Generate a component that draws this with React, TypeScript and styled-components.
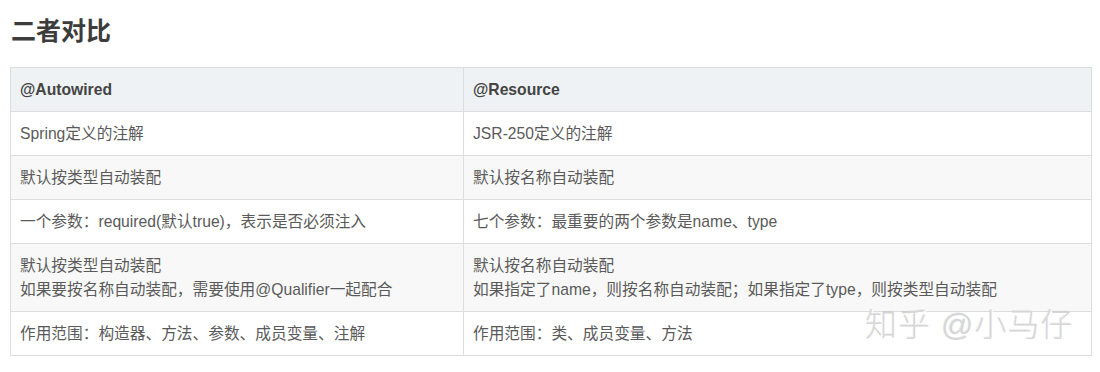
import styled, { createGlobalStyle } from 'styled-components';

const GlobalStyle = createGlobalStyle`
  html, body {
    margin: 0;
    padding: 0;
    background: #fff;
  }
  body {
    font-family: 'Liberation Sans', Arial, 'Noto Sans CJK SC', sans-serif;
    color: #555;
  }
`;

const Page = styled.div`
  position: relative;
  padding: 14px 9px 0 10px;
`;

const Title = styled.h2`
  margin: 0 0 19px 1px;
  font-size: 25px;
  line-height: 34px;
  font-weight: 700;
  color: #3c3c3c;
`;

const Table = styled.table`
  width: 1082px;
  border-collapse: collapse;
  table-layout: fixed;
  font-size: 15.7px;
  line-height: 24px;
`;

const Row = styled.tr<{ $striped?: boolean }>`
  background: ${(p) => (p.$striped ? '#f8f8f8' : '#fff')};
`;

const HeadCell = styled.th`
  text-align: left;
  font-weight: 700;
  color: #444;
  background: #eff2f5;
  border: 1px solid #dddddd;
  padding: 10px 9px 9px;
`;

const Cell = styled.td`
  border: 1px solid #dddddd;
  padding: 10px 9px 9px;
  color: #5a5a5a;
  vertical-align: top;
`;

const Watermark = styled.div`
  position: absolute;
  left: 865px;
  top: 305px;
  font-size: 32px;
  line-height: 40px;
  font-weight: 300;
  color: #d6d6d6;
  letter-spacing: 1px;
  text-shadow: 1px 1px 0 #fff, -1px -1px 0 rgba(0, 0, 0, 0.06);
  pointer-events: none;
  white-space: pre;
`;

const rows: [string[], string[]][] = [
  [['Spring定义的注解'], ['JSR-250定义的注解']],
  [['默认按类型自动装配'], ['默认按名称自动装配']],
  [['一个参数：required(默认true)，表示是否必须注入'], ['七个参数：最重要的两个参数是name、type']],
  [
    ['默认按类型自动装配', '如果要按名称自动装配，需要使用@Qualifier一起配合'],
    ['默认按名称自动装配', '如果指定了name，则按名称自动装配；如果指定了type，则按类型自动装配'],
  ],
  [['作用范围：构造器、方法、参数、成员变量、注解'], ['作用范围：类、成员变量、方法']],
];

function Lines({ lines }: { lines: string[] }) {
  return (
    <>
      {lines.map((l, i) => (
        <span key={i}>
          {i > 0 && <br />}
          {l}
        </span>
      ))}
    </>
  );
}

export default function App() {
  return (
    <Page>
      <GlobalStyle />
      <Title>二者对比</Title>
      <Table>
        <colgroup>
          <col style={{ width: 453 }} />
          <col />
        </colgroup>
        <thead>
          <tr>
            <HeadCell>@Autowired</HeadCell>
            <HeadCell>@Resource</HeadCell>
          </tr>
        </thead>
        <tbody>
          {rows.map(([a, b], i) => (
            <Row key={i} $striped={i % 2 === 1}>
              <Cell>
                <Lines lines={a} />
              </Cell>
              <Cell>
                <Lines lines={b} />
              </Cell>
            </Row>
          ))}
        </tbody>
      </Table>
      <Watermark>知乎 @小马仔</Watermark>
    </Page>
  );
}
